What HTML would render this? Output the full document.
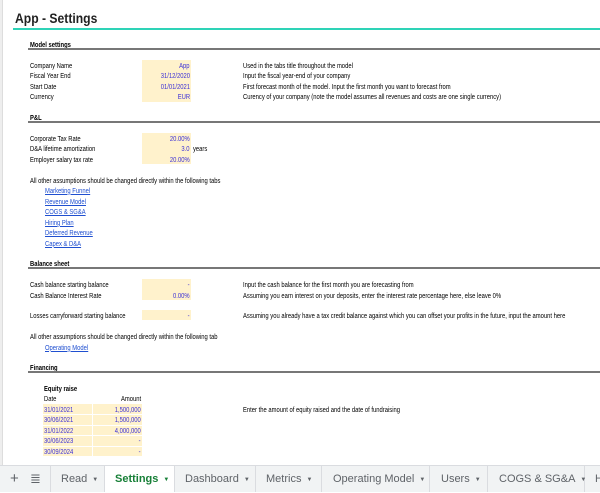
<!DOCTYPE html>
<html><head><meta charset="utf-8"><style>
*{margin:0;padding:0;box-sizing:border-box}
body{width:600px;height:492px;overflow:hidden;background:#fff;font-family:"Liberation Sans",Arial,sans-serif;position:relative;color:#000}
.t{position:absolute;white-space:nowrap;font-size:7.6px;line-height:9px;transform:scaleX(.77);transform-origin:0 0}
.r{transform-origin:100% 0;text-align:right}
.b{font-weight:bold}
.v{color:#3b2fd6}
.l{color:#1f4fd0;text-decoration:underline}
.c{position:absolute;background:#fff2cc}
.h{position:absolute;height:1.5px;background:#777;left:28px;right:0}
.tab{position:absolute;top:466px;height:26px;font-size:11px;color:#5f6368;line-height:26px;white-space:nowrap;border-right:1px solid #dadce0}
.tab i{font-style:normal;font-size:6px;margin-left:5px;vertical-align:1px}
</style></head><body>
<div style="position:absolute;left:0;top:0;width:3px;height:466px;background:#eee;border-right:1px solid #ddd"></div>
<div style="position:absolute;left:15px;top:11px;font-size:13.5px;font-weight:bold;color:#222;transform:scaleX(.9);transform-origin:0 0;white-space:nowrap">App - Settings</div>
<div style="position:absolute;left:13px;right:0;top:28px;height:2px;background:#2ed3b7"></div>

<div class="t b" style="left:30px;top:40px">Model settings</div><div class="h" style="top:48px"></div>
<div class="c" style="left:142px;top:60px;width:49px;height:42px"></div>
<div class="t" style="left:30px;top:61px">Company Name</div>
<div class="t" style="left:30px;top:71px">Fiscal Year End</div>
<div class="t" style="left:30px;top:82px">Start Date</div>
<div class="t" style="left:30px;top:92px">Currency</div>
<div class="t r v" style="right:410px;top:61px">App</div>
<div class="t r v" style="right:410px;top:71px">31/12/2020</div>
<div class="t r v" style="right:410px;top:82px">01/01/2021</div>
<div class="t r v" style="right:410px;top:92px">EUR</div>
<div class="t" style="left:243px;top:61px">Used in the tabs title throughout the model</div>
<div class="t" style="left:243px;top:71px">Input the fiscal year-end of your company</div>
<div class="t" style="left:243px;top:82px">First forecast month of the model. Input the first month you want to forecast from</div>
<div class="t" style="left:243px;top:92px">Curency of your company (note the model assumes all revenues and costs are one single currency)</div>

<div class="t b" style="left:30px;top:113px">P&amp;L</div><div class="h" style="top:121px"></div>
<div class="c" style="left:142px;top:133px;width:49px;height:31px"></div>
<div class="t" style="left:30px;top:134px">Corporate Tax Rate</div>
<div class="t" style="left:30px;top:144px">D&amp;A lifetime amortization</div>
<div class="t" style="left:30px;top:155px">Employer salary tax rate</div>
<div class="t r v" style="right:410px;top:134px">20.00%</div>
<div class="t r v" style="right:410px;top:144px">3.0</div>
<div class="t" style="left:193px;top:144px">years</div>
<div class="t r v" style="right:410px;top:155px">20.00%</div>

<div class="t" style="left:30px;top:176px">All other assumptions should be changed directly within the following tabs</div>
<div class="t l" style="left:45px;top:186px">Marketing Funnel</div>
<div class="t l" style="left:45px;top:197px">Revenue Model</div>
<div class="t l" style="left:45px;top:207px">COGS &amp; SG&amp;A</div>
<div class="t l" style="left:45px;top:218px">Hiring Plan</div>
<div class="t l" style="left:45px;top:228px">Deferred Revenue</div>
<div class="t l" style="left:45px;top:239px">Capex &amp; D&amp;A</div>

<div class="t b" style="left:30px;top:259px">Balance sheet</div><div class="h" style="top:267px"></div>
<div class="c" style="left:142px;top:279px;width:49px;height:21px"></div>
<div class="c" style="left:142px;top:310px;width:49px;height:10px"></div>
<div class="t" style="left:30px;top:280px">Cash balance starting balance</div>
<div class="t" style="left:30px;top:291px">Cash Balance Interest Rate</div>
<div class="t" style="left:30px;top:311px">Losses carryforward starting balance</div>
<div class="t r v" style="right:410px;top:280px">-</div>
<div class="t r v" style="right:410px;top:291px">0.00%</div>
<div class="t r v" style="right:410px;top:311px">-</div>
<div class="t" style="left:243px;top:280px">Input the cash balance for the first month you are forecasting from</div>
<div class="t" style="left:243px;top:291px">Assuming you earn interest on your deposits, enter the interest rate percentage here, else leave 0%</div>
<div class="t" style="left:243px;top:311px">Assuming you already have a tax credit balance against which you can offset your profits in the future, input the amount here</div>
<div class="t" style="left:30px;top:332px">All other assumptions should be changed directly within the following tab</div>
<div class="t l" style="left:45px;top:343px">Operating Model</div>

<div class="t b" style="left:30px;top:363px">Financing</div><div class="h" style="top:371px"></div>
<div class="t b" style="left:44px;top:384px">Equity raise</div>
<div class="t" style="left:44px;top:394px">Date</div>
<div class="t r" style="right:459px;top:394px">Amount</div>
<div class="c" style="left:43px;top:404px;width:49px;height:52px"></div>
<div class="c" style="left:93px;top:404px;width:49px;height:52px"></div>
<div style="position:absolute;left:43px;top:414px;width:99px;height:1px;background:#fff"></div>
<div style="position:absolute;left:43px;top:425px;width:99px;height:1px;background:#fff"></div>
<div style="position:absolute;left:43px;top:435px;width:99px;height:1px;background:#fff"></div>
<div style="position:absolute;left:43px;top:446px;width:99px;height:1px;background:#fff"></div>
<div class="t v" style="left:44px;top:405px">31/01/2021</div>
<div class="t v" style="left:44px;top:415px">30/06/2021</div>
<div class="t v" style="left:44px;top:426px">31/01/2022</div>
<div class="t v" style="left:44px;top:436px">30/06/2023</div>
<div class="t v" style="left:44px;top:447px">30/09/2024</div>
<div class="t r v" style="right:459px;top:405px">1,500,000</div>
<div class="t r v" style="right:459px;top:415px">1,500,000</div>
<div class="t r v" style="right:459px;top:426px">4,000,000</div>
<div class="t r v" style="right:459px;top:436px">-</div>
<div class="t r v" style="right:459px;top:447px">-</div>
<div class="t" style="left:243px;top:405px">Enter the amount of equity raised and the date of fundraising</div>

<div style="position:absolute;left:0;top:465px;width:600px;height:27px;background:#f1f3f4;border-top:1px solid #dadce0"></div>
<div style="position:absolute;left:10px;top:466px;font-size:15px;line-height:26px;color:#5f6368">+</div>
<div style="position:absolute;left:30px;top:466px;font-size:13px;line-height:26px;color:#5f6368">≣</div>
<div class="tab" style="left:50px;width:55px;border-left:1px solid #dadce0;padding-left:10px">Read<i>▼</i></div>
<div class="tab" style="left:105px;width:70px;background:#fff;color:#188038;font-weight:bold;padding-left:10px">Settings<i>▼</i></div>
<div class="tab" style="left:175px;width:81px;padding-left:10px">Dashboard<i>▼</i></div>
<div class="tab" style="left:256px;width:66px;padding-left:10px">Metrics<i>▼</i></div>
<div class="tab" style="left:322px;width:108px;padding-left:11px">Operating Model<i>▼</i></div>
<div class="tab" style="left:430px;width:58px;padding-left:11px">Users<i>▼</i></div>
<div class="tab" style="left:488px;width:97px;padding-left:11px">COGS &amp; SG&amp;A<i>▼</i></div>
<div class="tab" style="left:585px;width:30px;padding-left:10px;border:none">H</div>
</body></html>
